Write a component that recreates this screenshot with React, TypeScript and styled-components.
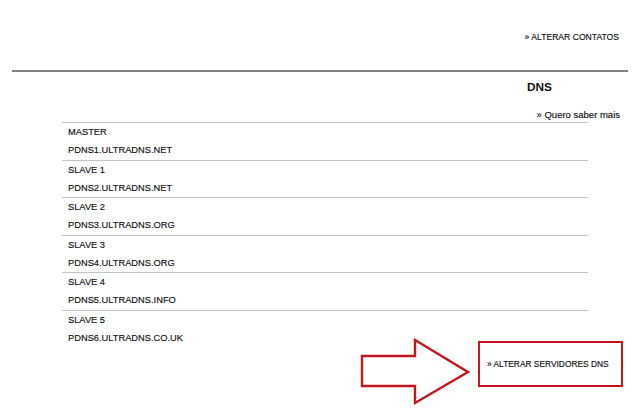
import React from 'react'
import styled, { createGlobalStyle } from 'styled-components'

const GlobalStyle = createGlobalStyle`
  html, body {
    margin: 0;
    padding: 0;
    background: #ffffff;
  }
  body {
    font-family: "Liberation Sans", Arial, sans-serif;
    color: #161616;
  }
`

const servers = [
  { label: 'MASTER', host: 'PDNS1.ULTRADNS.NET' },
  { label: 'SLAVE 1', host: 'PDNS2.ULTRADNS.NET' },
  { label: 'SLAVE 2', host: 'PDNS3.ULTRADNS.ORG' },
  { label: 'SLAVE 3', host: 'PDNS4.ULTRADNS.ORG' },
  { label: 'SLAVE 4', host: 'PDNS5.ULTRADNS.INFO' },
  { label: 'SLAVE 5', host: 'PDNS6.ULTRADNS.CO.UK' },
]

const Arrow = () => (
  <ArrowSvg width="112" height="68" viewBox="0 0 112 68">
    <polygon
      points="2,18 55,18 55,2 108,34 55,65 55,48 2,48"
      fill="#ffffff"
      stroke="#c3161f"
      strokeWidth="2.4"
      strokeLinejoin="miter"
    />
  </ArrowSvg>
)

const App = () => {
  return (
    <Page>
      <GlobalStyle />
      <TopBar>
        <SmallLink $size={8.6}>» ALTERAR CONTATOS</SmallLink>
      </TopBar>
      <Divider />
      <Title>DNS</Title>
      <MoreRow>
        <SmallLink $size={9.5}>» Quero saber mais</SmallLink>
      </MoreRow>
      <Table>
        {servers.map((s) => (
          <Row key={s.label}>
            <Cell>{s.label}</Cell>
            <Cell>{s.host}</Cell>
          </Row>
        ))}
      </Table>
      <Footer>
        <Arrow />
        <ActionBox>
          <SmallLink $size={8.4}>» ALTERAR SERVIDORES DNS</SmallLink>
        </ActionBox>
      </Footer>
    </Page>
  )
}

export default App

const Page = styled.div`
  width: 640px;
  height: 416px;
  overflow: hidden;
  display: flex;
  flex-direction: column;
`
const TopBar = styled.div`
  height: 70px;
  box-sizing: border-box;
  padding: 31px 21px 0 0;
  display: flex;
  justify-content: flex-end;
  align-items: flex-start;
`
const SmallLink = styled.span<{ $size: number }>`
  font-size: ${(p) => p.$size}px;
  line-height: 12px;
  color: #111111;
  white-space: nowrap;
  -webkit-text-stroke: 0.15px #111111;
`
const Divider = styled.div`
  margin: 0 12px;
  height: 2px;
  background: #828282;
`
const Title = styled.div`
  margin-top: 8px;
  padding-right: 88px;
  text-align: right;
  font-size: 11.8px;
  line-height: 14px;
  font-weight: bold;
  color: #111111;
`
const MoreRow = styled.div`
  margin-top: 15px;
  padding-right: 20px;
  display: flex;
  justify-content: flex-end;
`
const Table = styled.div`
  margin: 1px 0 0 62px;
  width: 526px;
  display: flex;
  flex-direction: column;
`
const Row = styled.div`
  border-top: 1px solid #c4c4c4;
  padding: 0 0 0 6px;
  display: flex;
  flex-direction: column;
`
const Cell = styled.div`
  font-size: 9.3px;
  line-height: 18.25px;
  color: #111111;
  -webkit-text-stroke: 0.15px #111111;
`
const Footer = styled.div`
  margin-top: -9px;
  padding-right: 17px;
  display: flex;
  justify-content: flex-end;
  align-items: flex-start;
  gap: 6px;
`
const ArrowSvg = styled.svg`
  display: block;
  flex-shrink: 0;
`
const ActionBox = styled.div`
  margin-top: 3px;
  width: 145px;
  height: 46px;
  box-sizing: border-box;
  border: 2px solid #c3161f;
  padding-left: 7px;
  display: flex;
  align-items: center;
`
